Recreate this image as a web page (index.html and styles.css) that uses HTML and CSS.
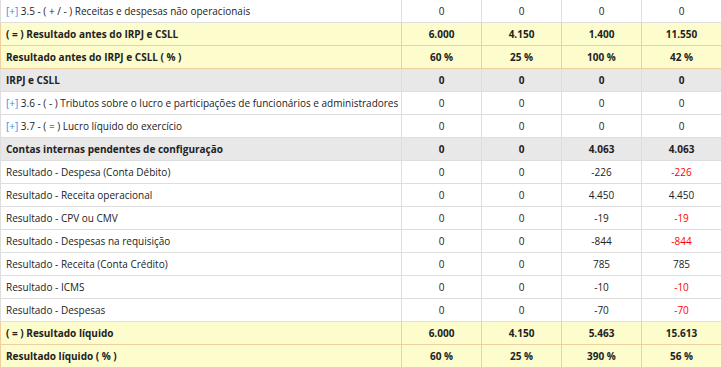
FILE: index.html
```html
<!DOCTYPE html>
<html lang="pt-BR">
<head>
<meta charset="utf-8">
<link rel="stylesheet" href="styles.css">
</head>
<body>
<table class="dre">
  <colgroup><col class="c-label"><col class="c-num"><col class="c-num"><col class="c-num"><col class="c-num"></colgroup>
  <tbody>
    <tr class="row"><td class="label"><a class="exp">[+]</a> 3.5 - ( + / - ) Receitas e despesas não operacionais</td><td>0</td><td>0</td><td>0</td><td>0</td></tr>
    <tr class="row total"><td class="label">( = ) Resultado antes do IRPJ e CSLL</td><td>6.000</td><td>4.150</td><td>1.400</td><td>11.550</td></tr>
    <tr class="row total"><td class="label">Resultado antes do IRPJ e CSLL ( % )</td><td>60 %</td><td>25 %</td><td>100 %</td><td>42 %</td></tr>
    <tr class="row group"><td class="label">IRPJ e CSLL</td><td>0</td><td>0</td><td>0</td><td>0</td></tr>
    <tr class="row"><td class="label"><a class="exp">[+]</a> 3.6 - ( - ) Tributos sobre o lucro e participações de funcionários e administradores</td><td>0</td><td>0</td><td>0</td><td>0</td></tr>
    <tr class="row"><td class="label"><a class="exp">[+]</a> 3.7 - ( = ) Lucro líquido do exercício</td><td>0</td><td>0</td><td>0</td><td>0</td></tr>
    <tr class="row group"><td class="label">Contas internas pendentes de configuração</td><td>0</td><td>0</td><td>4.063</td><td>4.063</td></tr>
    <tr class="row"><td class="label">Resultado - Despesa (Conta Débito)</td><td>0</td><td>0</td><td>-226</td><td class="neg">-226</td></tr>
    <tr class="row"><td class="label">Resultado - Receita operacional</td><td>0</td><td>0</td><td>4.450</td><td>4.450</td></tr>
    <tr class="row"><td class="label">Resultado - CPV ou CMV</td><td>0</td><td>0</td><td>-19</td><td class="neg">-19</td></tr>
    <tr class="row"><td class="label">Resultado - Despesas na requisição</td><td>0</td><td>0</td><td>-844</td><td class="neg">-844</td></tr>
    <tr class="row"><td class="label">Resultado - Receita (Conta Crédito)</td><td>0</td><td>0</td><td>785</td><td>785</td></tr>
    <tr class="row"><td class="label">Resultado - ICMS</td><td>0</td><td>0</td><td>-10</td><td class="neg">-10</td></tr>
    <tr class="row"><td class="label">Resultado - Despesas</td><td>0</td><td>0</td><td>-70</td><td class="neg">-70</td></tr>
    <tr class="row total"><td class="label">( = ) Resultado líquido</td><td>6.000</td><td>4.150</td><td>5.463</td><td>15.613</td></tr>
    <tr class="row total"><td class="label">Resultado líquido ( % )</td><td>60 %</td><td>25 %</td><td>390 %</td><td>56 %</td></tr>
  </tbody>
</table>
</body>
</html>
```
FILE: styles.css
```css
html, body {
  margin: 0;
  padding: 0;
  background: #ffffff;
}
.dre {
  border-collapse: collapse;
  table-layout: fixed;
  width: 722px;
  margin-top: -1px;
  font-family: "Open Sans", sans-serif;
  font-size: 10px;
  color: #222222;
}
.c-label { width: 401px; }
.c-num { width: 80px; }
.dre td {
  height: 23px;
  padding: 0 4px;
  box-sizing: border-box;
  border: 1px solid #dedede;
  text-align: center;
  white-space: nowrap;
  overflow: hidden;
}
.dre td.label {
  text-align: left;
  padding-left: 5px;
}
.exp {
  color: #3b8be0;
  text-decoration: none;
}
.neg { color: #ff0000; }
.total td {
  background: #fcfccc;
  border-color: #efcf9f;
  font-weight: bold;
}
.group td {
  background: #e8e8e8;
  font-weight: bold;
}
```
